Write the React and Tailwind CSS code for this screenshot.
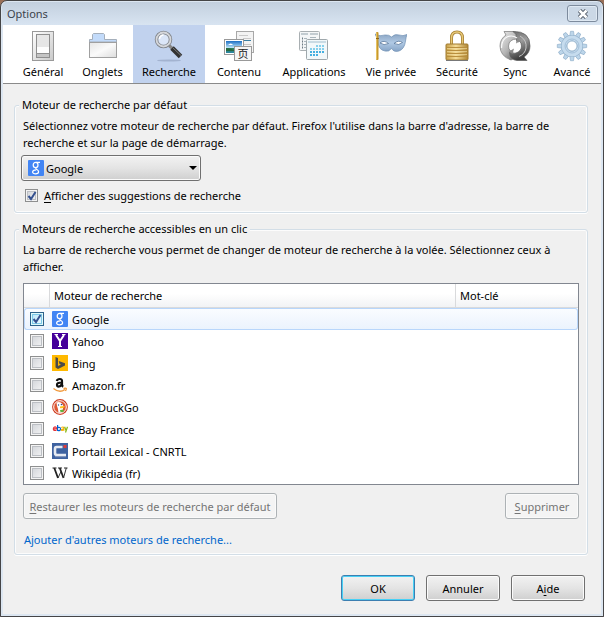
import React from "react";

function GeneralIcon() {
  return (
    <svg viewBox="0 0 32 32" className="size-8" aria-hidden="true">
      <defs>
        <linearGradient id="gen" x1="0" y1="0" x2="1" y2="1">
          <stop offset="0" stopColor="#ffffff" />
          <stop offset="1" stopColor="#c9c9c9" />
        </linearGradient>
      </defs>
      <rect x="5.500" y="1.500" width="21" height="29" fill="url(#gen)" stroke="#999" />
      <rect x="9" y="4" width="14" height="24" fill="#8e8e8e" />
      <rect x="10" y="5" width="12" height="12" fill="#e6e6e6" />
      <rect x="10" y="17" width="12" height="6" fill="#fdfdfd" />
      <rect x="10" y="24" width="12" height="3" fill="#c4c4c4" />
    </svg>
  );
}

function TabsIcon() {
  return (
    <svg viewBox="0 0 32 32" className="size-8" aria-hidden="true">
      <defs>
        <linearGradient id="tabg" x1="0" y1="0" x2="1" y2="1">
          <stop offset="0" stopColor="#e6e6e6" />
          <stop offset=".5" stopColor="#fafafa" />
          <stop offset="1" stopColor="#dcdcdc" />
        </linearGradient>
      </defs>
      <path d="M2.500 12V9.500H5.500V4.500L6.500 3.500H16.500L17.500 4.500V9.500H29.500V12Z" fill="#c3dbfa" stroke="#a5afbb" />
      <rect x="2.500" y="12.500" width="27" height="15" fill="url(#tabg)" stroke="#a0a0a0" />
    </svg>
  );
}

function SearchIcon() {
  return (
    <svg viewBox="0 0 32 32" className="size-8" aria-hidden="true">
      <ellipse cx="16" cy="30.500" rx="12" ry="1" fill="#a3b3d0" />
      <path d="M16 15.500L19.500 18.500" stroke="#888" strokeWidth="3" />
      <path d="M19 18L27.500 26.500" stroke="#333" strokeWidth="5" />
      <path d="M20 18L28 25.500" stroke="#777" strokeWidth="1" />
      <circle cx="10.500" cy="9.500" r="7" fill="#dbe6f8" stroke="#7f8389" strokeWidth="3.500" />
      <circle cx="10.500" cy="9.500" r="7" fill="none" stroke="#d5d7db" strokeWidth="1.800" />
      <path d="M6.500 9a4 4 0 0 1 4-4" fill="none" stroke="#fff" strokeWidth="1.500" />
    </svg>
  );
}

function ContentIcon() {
  return (
    <svg viewBox="0 0 32 32" className="size-8" aria-hidden="true">
      <defs>
        <linearGradient id="sky" x1="0" y1="0" x2="0" y2="1">
          <stop offset="0" stopColor="#1d6fc4" />
          <stop offset=".55" stopColor="#b8e2f8" />
          <stop offset=".6" stopColor="#2f7f55" />
          <stop offset="1" stopColor="#2a86a8" />
        </linearGradient>
      </defs>
      <rect x="13.500" y="1.500" width="17" height="21" fill="#f3f3f3" stroke="#a8a8a8" />
      <path d="M16 5.500h9M20 8.500h8M20 14.500h8M22 17.500h6" stroke="#c9c9c9" />
      <path d="M21 10.500h7" stroke="#3a7fa3" />
      <rect x="1.500" y="9.500" width="19" height="15" fill="#fff" stroke="#999" />
      <rect x="3" y="11" width="16" height="12" fill="url(#sky)" />
      <path d="M5 15q3-3 5 0z" fill="#fff" />
      <path d="M3 18q4 0 8 2t8-1v2H3z" fill="#26693e" />
      <rect x="11.500" y="16.500" width="17" height="14" fill="#f5f5f5" stroke="#999" />
      <text x="20" y="28" textAnchor="middle" fontSize="11" fill="#222" className="font-['Noto_Sans_CJK_SC',sans-serif]">页</text>
    </svg>
  );
}

const appDots = [
  [6, 0], [9, 0], [12, 0], [3, 3], [6, 3], [9, 3], [12, 3], [0, 3],
  [0, 6], [3, 6], [6, 6], [9, 6], [12, 6], [0, 9], [3, 9], [6, 9],
];

function AppsIcon() {
  return (
    <svg viewBox="0 0 32 32" className="size-8" aria-hidden="true">
      <rect x="1.500" y="1.500" width="20" height="19" rx="1" fill="#f4f6f7" stroke="#a9afb2" />
      <path d="M3 4h7M12 4h8" stroke="#c3ccd1" strokeWidth="2" />
      <path d="M4 8.500h1M4 11.500h1M4 14.500h1M4 17.500h1" stroke="#6f7c85" strokeWidth="2" />
      <path d="M6 8.500h3M6 11.500h2M6 14.500h2M6 17.500h2M12 7.500h6" stroke="#aab6bd" />
      <rect x="8.500" y="9.500" width="21" height="20" rx="1" fill="#f2f8fa" stroke="#9fa8ac" />
      <rect x="10" y="11" width="18" height="2" fill="#c9dbe4" />
      {appDots.map(([x, y]) => (
        <rect key={x + "-" + y} x={x + 12} y={y + 15} width="2" height="2" fill={y > 3 ? "#45afe0" : "#86d0ec"} />
      ))}
    </svg>
  );
}

function MaskIcon() {
  return (
    <svg viewBox="0 0 32 32" className="size-8" aria-hidden="true">
      <defs>
        <linearGradient id="mask" x1="0" y1="0" x2="0" y2="1">
          <stop offset="0" stopColor="#8ca6c4" />
          <stop offset=".5" stopColor="#b0c9e4" />
          <stop offset="1" stopColor="#86a4c6" />
        </linearGradient>
      </defs>
      <path d="M0 4Q5 7 10 5Q14 4.500 16.500 7Q20 3.500 24 5T32 4.500Q31 7 30.500 11Q29.500 19 24 21Q19 22.500 16.500 18.500Q14 22 10 21Q3.500 20 3 12Q2 7 0 4Z" fill="url(#mask)" stroke="#6f8fb3" strokeWidth=".7" />
      <path d="M5 13Q9 9.500 13.500 13.500Q9 16 5 13ZM19 13.500Q23.500 9.500 27.500 12.500Q24 16 19 13.500Z" fill="#fff" stroke="#55759b" strokeWidth=".8" />
      <rect x="1" y="2" width="2.500" height="28" rx="1" fill="#c99a2c" />
      <path d="M1.500 3v26" stroke="#f0d27a" strokeWidth=".7" />
      <path d="M1 8.500h3" stroke="#8c641a" />
    </svg>
  );
}

function LockIcon() {
  return (
    <svg viewBox="0 0 32 32" className="size-8" aria-hidden="true">
      <defs>
        <linearGradient id="lock" x1="0" y1="0" x2="1" y2="0">
          <stop offset="0" stopColor="#c79f48" />
          <stop offset=".45" stopColor="#f5dc96" />
          <stop offset="1" stopColor="#b08735" />
        </linearGradient>
      </defs>
      <path d="M10.500 16V8Q10.500 2 16 2T21.500 8V16" fill="none" stroke="#a37c2e" strokeWidth="3" />
      <path d="M10.500 16V8Q10.500 2 16 2T21.500 8V16" fill="none" stroke="#e6c878" strokeWidth="1.500" />
      <rect x="5" y="14" width="22" height="16" rx="1" fill="url(#lock)" stroke="#a07a30" />
      <path d="M6 17.500h20M6 20.500h20M6 23.500h20M6 26.500h20" stroke="#b98f3e" />
      <path d="M6 18.500h20M6 21.500h20M6 24.500h20" stroke="#f3dfa3" strokeWidth=".6" />
      <path d="M5 30.500h22" stroke="#777" />
    </svg>
  );
}

function SyncIcon() {
  return (
    <svg viewBox="0 0 32 32" className="size-8" aria-hidden="true">
      <defs>
        <linearGradient id="sync1" x1="0" y1="0" x2="1" y2="1">
          <stop offset="0" stopColor="#efefef" />
          <stop offset=".5" stopColor="#b4b4b4" />
          <stop offset="1" stopColor="#4a4a4a" />
        </linearGradient>
        <linearGradient id="sync2" x1="0" y1="0" x2=".3" y2="1">
          <stop offset="0" stopColor="#666" />
          <stop offset=".45" stopColor="#9c9c9c" />
          <stop offset="1" stopColor="#3c3c3c" />
        </linearGradient>
      </defs>
      <path d="M12 30Q1 26 1 16Q1 9 7 5L5 1.500H14Q20 2 21 10L18 9Q10 9 9.500 16Q9.500 19 11.500 21L14 19V29Z" fill="url(#sync1)" stroke="#777" strokeWidth=".7" />
      <path d="M14 1.500Q31 1 31 16Q31 23 25 27L28 30.500H18Q11 30 10.500 22.500Q14 24 17 23Q22.500 21 22.500 16Q22.500 13 20.500 11L17.500 14V8Q18 4 14 1.500Z" fill="url(#sync2)" stroke="#5c5c5c" strokeWidth=".7" />
      <path d="M2.500 18Q2.500 9 9 6.500Q14 5 18 8" fill="none" stroke="#fafafa" strokeWidth="1.200" />
      <path d="M21 6Q28 10 27 18Q26 24 20 26.500" fill="none" stroke="#c6c6c6" strokeWidth="1" />
      <ellipse cx="16" cy="16.500" rx="5.200" ry="5.500" fill="#fff" />
      <path d="M18 8.500L17 13.500L22 10.500ZM13.500 24L15 18.500L10 21.500Z" fill="#8a8a8a" />
    </svg>
  );
}

const teeth = [0, 30, 60, 90, 120, 150, 180, 210, 240, 270, 300, 330];

function GearIcon() {
  return (
    <svg viewBox="0 0 32 32" className="size-8" aria-hidden="true">
      {teeth.map((a) => (
        <path key={a} d="M13.800 6L14.500 1.300H17.500L18.200 6Z" fill="#bdd6ea" stroke="#93b1cb" strokeWidth=".7" transform={`rotate(${a} 16 16)`} />
      ))}
      <circle cx="16" cy="16" r="8" fill="none" stroke="#93b1cb" strokeWidth="6" />
      <circle cx="16" cy="16" r="8" fill="none" stroke="#c6dcee" strokeWidth="5" />
      <circle cx="16" cy="16" r="7" fill="none" stroke="#a3bfd8" strokeWidth="1" />
      <circle cx="16" cy="16" r="5" fill="#fff" stroke="#8faec9" strokeWidth=".8" />
    </svg>
  );
}

function GoogleLogo() {
  return (
    <svg viewBox="0 0 16 16" className="size-4" aria-hidden="true">
      <rect width="16" height="16" rx="1" fill="#4285f4" />
      <ellipse cx="7.600" cy="5" rx="2.400" ry="2.700" fill="none" stroke="#fff" strokeWidth="1.200" />
      <path d="M8 2.300h4M8.500 7.500q-1.500 1 .3 2t1.800 2.300q0 2-3 2t-3-1.800q0-2 3.500-2.200" fill="none" stroke="#fff" strokeWidth="1.200" />
    </svg>
  );
}

function YahooLogo() {
  return (
    <svg viewBox="0 0 16 16" className="size-4" aria-hidden="true">
      <rect width="16" height="16" fill="#45009a" />
      <path d="M4 2L8 8L12 2M8 7.500V14" fill="none" stroke="#fff" strokeWidth="2" />
      <path d="M2.500 1.500h3.500M10 1.500h3.500M6 13.500h4" stroke="#fff" strokeWidth="1" />
    </svg>
  );
}

function BingLogo() {
  return (
    <svg viewBox="0 0 16 16" className="size-4" aria-hidden="true">
      <rect width="16" height="16" fill="#ffb900" />
      <path d="M3.500 2L6 3V11L9 9.500L7.500 9L6.700 6L13 8.300V10.500L6 14L3.500 12.500Z" fill="#4a4a4a" />
    </svg>
  );
}

function AmazonLogo() {
  return (
    <svg viewBox="0 0 16 16" className="size-4" aria-hidden="true">
      <path d="M4.800 4Q5.300 2 7.800 2T10 4.500V7.500Q10 9 11.200 9.700M9.500 5.500Q5 5.500 5 7.700Q5 9.600 6.700 9.600Q8.700 9.600 9.500 7.500" fill="none" stroke="#111" strokeWidth="2.200" />
      <path d="M1.500 11.500Q7.500 16.500 13 12.500M11.500 11.500Q14 10.800 14.300 11.300T13.500 14" fill="none" stroke="#f19a3e" strokeWidth="1.300" />
    </svg>
  );
}

function DuckLogo() {
  return (
    <svg viewBox="0 0 16 16" className="size-4" aria-hidden="true">
      <circle cx="8" cy="8" r="7.900" fill="#cf3f24" />
      <circle cx="8" cy="8" r="6.300" fill="#de5833" stroke="#fff" strokeWidth="1" />
      <path d="M4.500 3.500Q8 2 10 4.500T11 9L10.500 13.500L6.500 13.800Q6 9 5 7Z" fill="#fff" />
      <path d="M8 7.500Q12 6.300 13 7.500Q12 9.300 8 9.300Z" fill="#fdc21a" />
      <path d="M8 11L11.500 10.500V13L8.500 13Z" fill="#5cb53c" />
      <circle cx="9.500" cy="5.500" r=".8" fill="#2d4f8e" />
      <circle cx="6.500" cy="6" r=".7" fill="#2d4f8e" />
    </svg>
  );
}

function EbayLogo() {
  return (
    <svg viewBox="0 0 16 16" className="size-4" aria-hidden="true">
      <g fill="none" strokeWidth="1.200">
        <path d="M1.500 7.800h3Q4.500 5.800 3 5.800T1.300 8Q1.500 10 4.500 9.300" stroke="#e53238" />
        <path d="M5.600 4v5.500Q8.500 10 8.500 7.900T5.600 6.500" stroke="#0064d2" />
        <path d="M9.300 6.500Q11.600 5.300 11.800 7V9.800M11.500 8Q9.300 7.900 9.400 9T11.700 8.800" stroke="#f5af02" />
        <path d="M12.600 5.800L14 9.500M15.500 5.800L13.500 11.500" stroke="#86b817" />
      </g>
    </svg>
  );
}

function CnrtlLogo() {
  return (
    <svg viewBox="0 0 16 16" className="size-4" aria-hidden="true">
      <rect width="16" height="16" fill="#3e62a0" />
      <path d="M10.500 4H4.500Q3 4 3 6V10Q3 12 5 12H14" fill="none" stroke="#e6eaf2" strokeWidth="2.600" />
      <path d="M3 13.700H14" stroke="#8a9cc0" />
      <rect x="11.500" y="2" width="3" height="3" fill="#dc3b3b" />
    </svg>
  );
}

function WikiLogo() {
  return (
    <svg viewBox="0 0 16 16" className="size-4" aria-hidden="true">
      <path d="M.5 3h4M6 3h4M12 3h3.500" stroke="#222" strokeWidth="1" />
      <path d="M2.300 3L6 13M7.800 3L11.500 13" fill="none" stroke="#222" strokeWidth="1.800" />
      <path d="M6 13L9 6.500M11.500 13L14.300 3" fill="none" stroke="#333" strokeWidth="1" />
    </svg>
  );
}

const tabs = [
  { label: "Général", Icon: GeneralIcon, width: "w-[58px]" },
  { label: "Onglets", Icon: TabsIcon, width: "w-[61px]" },
  { label: "Recherche", Icon: SearchIcon, width: "w-[72px]", active: true },
  { label: "Contenu", Icon: ContentIcon, width: "w-[68px]" },
  { label: "Applications", Icon: AppsIcon, width: "w-[82px]" },
  { label: "Vie privée", Icon: MaskIcon, width: "w-[72px]" },
  { label: "Sécurité", Icon: LockIcon, width: "w-[60px]" },
  { label: "Sync", Icon: SyncIcon, width: "w-[56px]" },
  { label: "Avancé", Icon: GearIcon, width: "w-[58px]" },
];

const engines = [
  { name: "Google", Logo: GoogleLogo, checked: true },
  { name: "Yahoo", Logo: YahooLogo },
  { name: "Bing", Logo: BingLogo },
  { name: "Amazon.fr", Logo: AmazonLogo },
  { name: "DuckDuckGo", Logo: DuckLogo },
  { name: "eBay France", Logo: EbayLogo },
  { name: "Portail Lexical - CNRTL", Logo: CnrtlLogo },
  { name: "Wikipédia (fr)", Logo: WikiLogo },
];

const grayBox = "border-[#8e8f8f] from-[#cfd2d7] to-[#f6f6f6] shadow-[inset_0_0_0_1px_#f4f4f4,inset_0_0_0_2px_#bcbfc4]";
const blueBox = "border-[#2c628b] from-[#b4e3f8] to-[#f0fbff] shadow-[inset_0_0_0_1px_#def9fa,inset_0_0_0_2px_#7dc8e8]";

function CheckBox({ id, label, checked, look }) {
  return (
    <span className="relative inline-grid shrink-0 place-items-center">
      <input
        id={id}
        type="checkbox"
        aria-label={label}
        defaultChecked={checked}
        className={`peer appearance-none border bg-linear-to-br ${look}`}
      />
      <svg viewBox="0 0 12 12" className="pointer-events-none absolute hidden size-3 peer-checked:block" aria-hidden="true">
        <path d="M2.500 6L5 9L9.500 2" fill="none" stroke="#34508f" strokeWidth="2" />
      </svg>
    </span>
  );
}

function Group({ title, children }) {
  return (
    <fieldset className="min-w-0 rounded-[3px] border border-[#d3dee7] px-1 shadow-[inset_0_0_0_1px_#fcfcfc,0_1px_0_#fff]">
      <legend className="bg-[#f0f0f0] px-[3px] leading-4">{title}</legend>
      {children}
    </fieldset>
  );
}

const button =
  "h-[26px] rounded-[3px] border border-[#707070] bg-linear-to-b from-[#f2f2f2] via-[#e4e4e4] to-[#cfcfcf] text-center whitespace-nowrap shadow-[inset_0_0_0_1px_#fbfbfb]";
const disabledButton =
  "h-[26px] rounded-[3px] border border-[#adb2b5] bg-[#f4f4f4] text-center whitespace-nowrap text-[#757575] shadow-[inset_0_0_0_1px_#fafafa]";

export default function App() {
  return (
    <div className="min-h-screen bg-[#9a7058] font-['Noto_Sans','Open_Sans',sans-serif] text-[11px] leading-[17px] text-black">
      <div className="flex min-h-screen flex-col rounded-t-[7px] border border-[#454547] bg-[#dce6f1] p-px">
        <header className="flex h-[23px] items-center justify-between rounded-t-[5px] bg-linear-to-b from-[#c3d0df] to-[#d8e4f1] pr-1 pl-[5px]">
          <h1 className="text-[#3c434b]">Options</h1>
          <button type="button" aria-label="Fermer" className="grid h-[17px] w-[31px] place-items-center rounded-[3px] border border-[#7d8b9d] bg-[#cbd8e6] shadow-[inset_0_0_0_1px_#dfe9f3]">
            <svg viewBox="0 0 12 10" className="h-[10px] w-3" aria-hidden="true">
              <path d="M2.500 1.500L9.500 8.500M9.500 1.500L2.500 8.500" stroke="#535c68" strokeWidth="4.500" />
              <path d="M2.500 1.500L9.500 8.500M9.500 1.500L2.500 8.500" stroke="#fff" strokeWidth="2.500" />
            </svg>
          </button>
        </header>

        <div className="mx-px mb-px flex grow flex-col bg-[#f0f0f0]">
          <nav className="flex h-[59px] justify-center border-b border-[#8a8a8a] bg-white pl-[11px]" aria-label="Catégories">
            {tabs.map(({ label, Icon, width, active }) => (
              <button
                key={label}
                type="button"
                aria-current={active ? "page" : undefined}
                className={`flex flex-col items-center pt-[5px] whitespace-nowrap ${width} ${active ? "bg-[#c1d2ee]" : ""}`}
              >
                <Icon />
                <span className="pt-px">{label}</span>
              </button>
            ))}
          </nav>

          <main className="flex flex-col gap-2 pt-[13px] pr-[13px] pl-[11px]">
            <Group title="Moteur de recherche par défaut">
              <p className="px-1 pt-1">
                Sélectionnez votre moteur de recherche par défaut. Firefox l'utilise dans la barre d'adresse, la barre de
                recherche et sur la page de démarrage.
              </p>
              <div className="mt-1 flex px-[2px]">
                <div className="relative flex w-[180px] items-center">
                  <select aria-label="Moteur de recherche par défaut" className={`${button} w-full appearance-none pl-6 text-left`}>
                    {engines.map((e) => (
                      <option key={e.name}>{e.name}</option>
                    ))}
                  </select>
                  <span className="pointer-events-none absolute left-[7px]">
                    <GoogleLogo />
                  </span>
                  <svg viewBox="0 0 8 4" className="pointer-events-none absolute right-1 h-1 w-2" aria-hidden="true">
                    <path d="M0 0h8L4 4z" />
                  </svg>
                </div>
              </div>
              <div className="flex items-center gap-[6px] px-[6px] pt-[6px] pb-2">
                <CheckBox id="suggestions" checked look={`size-[13px] ${grayBox}`} />
                <label htmlFor="suggestions">
                  <u className="underline-offset-2">A</u>fficher des suggestions de recherche
                </label>
              </div>
            </Group>

            <Group title="Moteurs de recherche accessibles en un clic">
              <p className="px-1 pt-1">
                La barre de recherche vous permet de changer de moteur de recherche à la volée. Sélectionnez ceux à
                afficher.
              </p>
              <div className="mx-1 mt-2 border border-[#828790] bg-white">
                <table className="w-full table-fixed border-separate border-spacing-0 text-left">
                  <thead>
                    <tr className="h-6 bg-linear-to-b from-white from-40% to-[#f1f2f4]">
                      <th aria-label="Actif" className="w-[26px] border-r border-b border-[#d9dadc] p-0"></th>
                      <th className="border-r border-b border-[#d9dadc] px-1 py-0 font-normal">Moteur de recherche</th>
                      <th className="w-[122px] border-b border-[#d9dadc] px-1 py-0 font-normal">Mot-clé</th>
                    </tr>
                  </thead>
                  <tbody>
                    {engines.map(({ name, Logo, checked }) => {
                      const cell = checked ? "border-y border-[#b8d6fb] bg-linear-to-b from-[#fafcff] to-[#ebf3fd]" : "";
                      return (
                        <tr key={name} className="h-[22px]">
                          <td className={`p-0 ${cell} ${checked ? "rounded-l-[3px] border-l" : ""}`}>
                            <div className={`flex items-center ${checked ? "pl-[5px]" : "pl-[6px]"}`}>
                              <CheckBox label={name} checked={checked} look={`size-[14px] ${checked ? blueBox : grayBox}`} />
                            </div>
                          </td>
                          <td className={`p-0 ${cell}`}>
                            <div className="flex items-center gap-1 pl-[2px]">
                              <Logo />
                              <span>{name}</span>
                            </div>
                          </td>
                          <td className={`p-0 ${cell} ${checked ? "rounded-r-[3px] border-r" : ""}`}></td>
                        </tr>
                      );
                    })}
                  </tbody>
                </table>
              </div>
              <div className="mx-1 mt-2 flex justify-between">
                <button type="button" disabled className={`${disabledButton} w-[254px]`}>
                  <u className="underline-offset-2">R</u>estaurer les moteurs de recherche par défaut
                </button>
                <button type="button" disabled className={`${disabledButton} w-[74px]`}>
                  <u className="underline-offset-2">S</u>upprimer
                </button>
              </div>
              <p className="px-[5px] pt-3 pb-[6px]">
                <a href="#engines" className="text-[#0066cc]">Ajouter d'autres moteurs de recherche...</a>
              </p>
            </Group>
          </main>

          <footer className="flex justify-end gap-[11px] pt-5 pr-4 pb-3">
            <button type="button" className="h-[26px] w-[74px] rounded-[3px] border border-[#3c7fb1] bg-linear-to-b from-[#f2f2f2] via-[#e4e4e4] to-[#cfcfcf] text-center shadow-[inset_0_0_0_1px_#48d0f5]">
              OK
            </button>
            <button type="button" className={`${button} w-[74px]`}>Annuler</button>
            <button type="button" className={`${button} w-[74px]`}>
              A<u className="underline-offset-2">i</u>de
            </button>
          </footer>
        </div>
      </div>
    </div>
  );
}
